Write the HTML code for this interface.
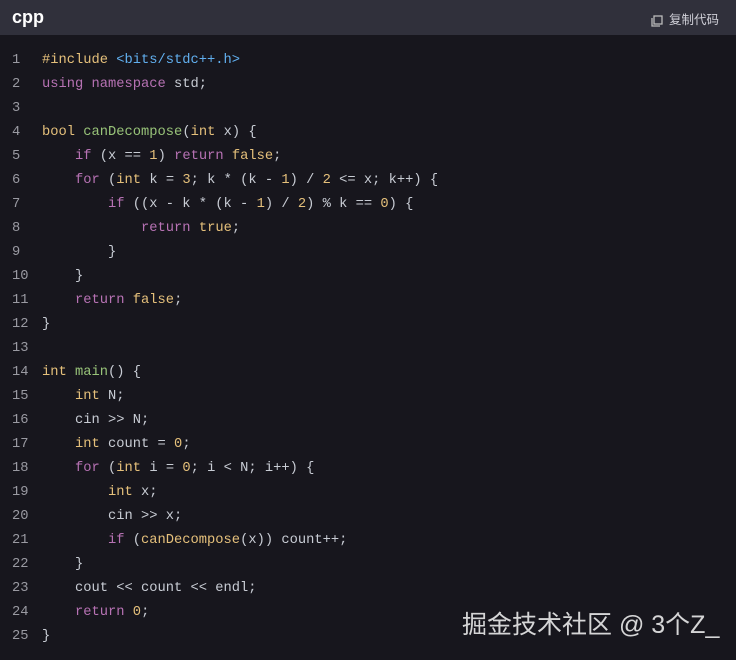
<!DOCTYPE html>
<html><head><meta charset="utf-8"><style>
body{margin:0;width:736px;height:660px;background:#17161d;overflow:hidden;font-family:"Liberation Sans","Noto Sans CJK SC",sans-serif}
.hd{height:35px;background:#30303b;position:relative}
.hd .l{position:absolute;left:12px;top:7px;color:#fff;font-weight:bold;font-size:18px}
.hd .r{position:absolute;right:17px;top:9px;color:#d0d0d8;font-size:12.5px}
.hd .r svg{vertical-align:-3px;margin-right:6px}
pre{margin:0;position:absolute;top:49px;left:0;font-family:"Liberation Mono",monospace;font-size:13.75px;line-height:24px;color:#c8ccd4}
.n{display:inline-block;width:30px;padding-left:12px;text-align:left;color:#9a9aa2}
.k{color:#b772b4}.t{color:#e5c07b}.f{color:#98c379}.y{color:#e5c07b}.s{color:#61afef}.d{color:#e5c07b}
.wm{position:absolute;left:462px;top:610px;color:rgba(255,255,255,.82);font-size:25px;line-height:30px}
</style></head><body>
<div class="hd"><span class="l">cpp</span><span class="r"><svg width="12" height="12" viewBox="0 0 12 12"><rect x="3" y="1" width="8" height="8" fill="none" stroke="#bbb" stroke-width="1.3"/><path d="M1 3v8h8" fill="none" stroke="#bbb" stroke-width="1.3"/></svg>复制代码</span></div>
<pre><span class="n">1</span><span class="y">#include</span> <span class="s">&lt;bits/stdc++.h&gt;</span>
<span class="n">2</span><span class="k">using</span> <span class="k">namespace</span> std;
<span class="n">3</span>
<span class="n">4</span><span class="t">bool</span> <span class="f">canDecompose</span>(<span class="t">int</span> x) {
<span class="n">5</span>    <span class="k">if</span> (x == <span class="d">1</span>) <span class="k">return</span> <span class="t">false</span>;
<span class="n">6</span>    <span class="k">for</span> (<span class="t">int</span> k = <span class="d">3</span>; k * (k - <span class="d">1</span>) / <span class="d">2</span> &lt;= x; k++) {
<span class="n">7</span>        <span class="k">if</span> ((x - k * (k - <span class="d">1</span>) / <span class="d">2</span>) % k == <span class="d">0</span>) {
<span class="n">8</span>            <span class="k">return</span> <span class="t">true</span>;
<span class="n">9</span>        }
<span class="n">10</span>    }
<span class="n">11</span>    <span class="k">return</span> <span class="t">false</span>;
<span class="n">12</span>}
<span class="n">13</span>
<span class="n">14</span><span class="t">int</span> <span class="f">main</span>() {
<span class="n">15</span>    <span class="t">int</span> N;
<span class="n">16</span>    cin &gt;&gt; N;
<span class="n">17</span>    <span class="t">int</span> count = <span class="d">0</span>;
<span class="n">18</span>    <span class="k">for</span> (<span class="t">int</span> i = <span class="d">0</span>; i &lt; N; i++) {
<span class="n">19</span>        <span class="t">int</span> x;
<span class="n">20</span>        cin &gt;&gt; x;
<span class="n">21</span>        <span class="k">if</span> (<span class="y">canDecompose</span>(x)) count++;
<span class="n">22</span>    }
<span class="n">23</span>    cout &lt;&lt; count &lt;&lt; endl;
<span class="n">24</span>    <span class="k">return</span> <span class="d">0</span>;
<span class="n">25</span>}</pre>
<div class="wm">掘金技术社区 @ 3个Z_</div>
</body></html>
